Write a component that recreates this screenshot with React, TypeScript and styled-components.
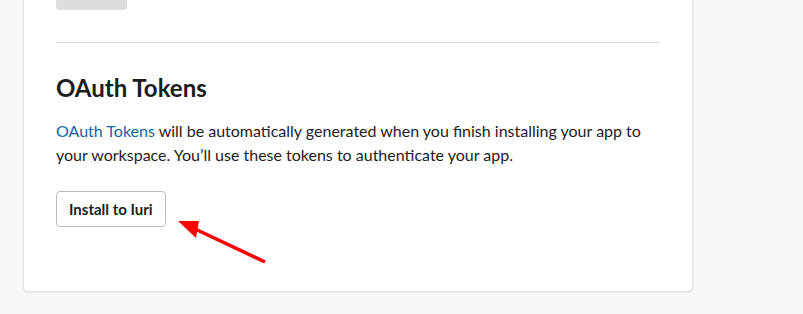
import React from "react";
import styled, { createGlobalStyle } from "styled-components";

const Global = createGlobalStyle`
  html, body { margin: 0; padding: 0; background: #f8f8f8; }
  body { font-family: Lato, "Noto Sans", Arial, sans-serif; -webkit-font-smoothing: antialiased; }
`;

const Page = styled.div`
  position: relative;
  min-height: 314px;
  overflow: hidden;
  background: #f8f8f8;
`;

const Card = styled.section`
  box-sizing: border-box;
  width: 670px;
  margin: -59px 0 0 23px;
  padding: 32px 32px 64px;
  background: #ffffff;
  border: 1px solid #e3e3e3;
  border-radius: 5px;
  box-shadow: 0 1px 2px rgba(0, 0, 0, 0.06);
`;

const PlaceholderButton = styled.div`
  width: 71px;
  height: 36px;
  border-radius: 4px;
  background: #dddddd;
`;

const Divider = styled.hr`
  margin: 32px 0 0;
  border: 0;
  border-top: 1px solid #dddddd;
  height: 0;
`;

const Heading = styled.h2`
  margin: 30px 0 16px;
  font-size: 24px;
  line-height: 30px;
  font-weight: 700;
  color: #1d1c1d;
`;

const Paragraph = styled.p`
  margin: 0;
  font-size: 16px;
  line-height: 24px;
  color: #1d1c1d;
`;

const Link = styled.a`
  color: #1264a3;
  text-decoration: none;
`;

const Button = styled.button`
  box-sizing: border-box;
  margin-top: 24px;
  height: 36px;
  padding: 0 12px;
  border: 1px solid #bbbbbb;
  border-radius: 4px;
  background: #ffffff;
  font-family: Lato, "Noto Sans", Arial, sans-serif;
  font-size: 15px;
  font-weight: 700;
  color: #1d1c1d;
  cursor: pointer;
`;

const Arrow = styled.svg`
  position: absolute;
  left: 0;
  top: 0;
  pointer-events: none;
`;

export default function App() {
  return (
    <Page>
      <Global />
      <Card>
        <PlaceholderButton />
        <Divider />
        <Heading>OAuth Tokens</Heading>
        <Paragraph>
          <Link href="#">OAuth Tokens</Link> will be automatically generated when you finish installing your app to
          your workspace. You’ll use these tokens to authenticate your app.
        </Paragraph>
        <Button>Install to Iuri</Button>
      </Card>
      <Arrow width="803" height="314" viewBox="0 0 803 314">
        <line x1="265" y1="262" x2="193" y2="228" stroke="#ff0000" strokeWidth="3.5" />
        <polygon points="178,221 199,221 196,238" fill="#ff0000" />
      </Arrow>
    </Page>
  );
}
